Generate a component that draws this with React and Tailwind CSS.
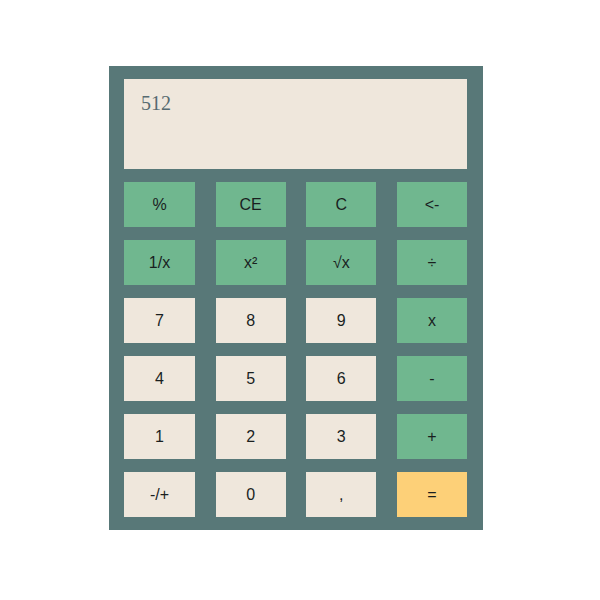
export default function App() {
  const keys = [
    ["%", "g"], ["CE", "g"], ["C", "g"], ["<-", "g"],
    ["1/x", "g"], ["x²", "g"], ["√x", "g"], ["÷", "g"],
    ["7", "b"], ["8", "b"], ["9", "b"], ["x", "g"],
    ["4", "b"], ["5", "b"], ["6", "b"], ["-", "g"],
    ["1", "b"], ["2", "b"], ["3", "b"], ["+", "g"],
    ["-/+", "b"], ["0", "b"], [",", "b"], ["=", "y"],
  ];
  const bg = { g: "bg-[#70b78f]", b: "bg-[#efe7dc]", y: "bg-[#fdd078]" };
  return (
    <div className="w-[600px] h-[600px] bg-white pt-[66px] pl-[109px]">
      <div className="w-[374px] h-[464px] bg-[#587878] pl-[15px] pr-[16px] pt-[13px] flex flex-col gap-[13px]">
        <div className="h-[90px] bg-[#efe7dc] pl-[17px] pt-[12px] text-[20px] leading-[24px] text-[#566a70] font-['Liberation_Serif',serif]">
          512
        </div>
        <div className="grid grid-cols-[71px_70px_70px_70px] gap-x-[20px] gap-y-[13px] justify-between">
          {keys.map(([k, c], i) => (
            <div
              key={i}
              className={`${bg[c]} h-[45px] flex items-center justify-center text-[16px] text-[#1a1f1f] font-['Liberation_Sans',Arial,sans-serif]`}
            >
              {k}
            </div>
          ))}
        </div>
      </div>
    </div>
  );
}
